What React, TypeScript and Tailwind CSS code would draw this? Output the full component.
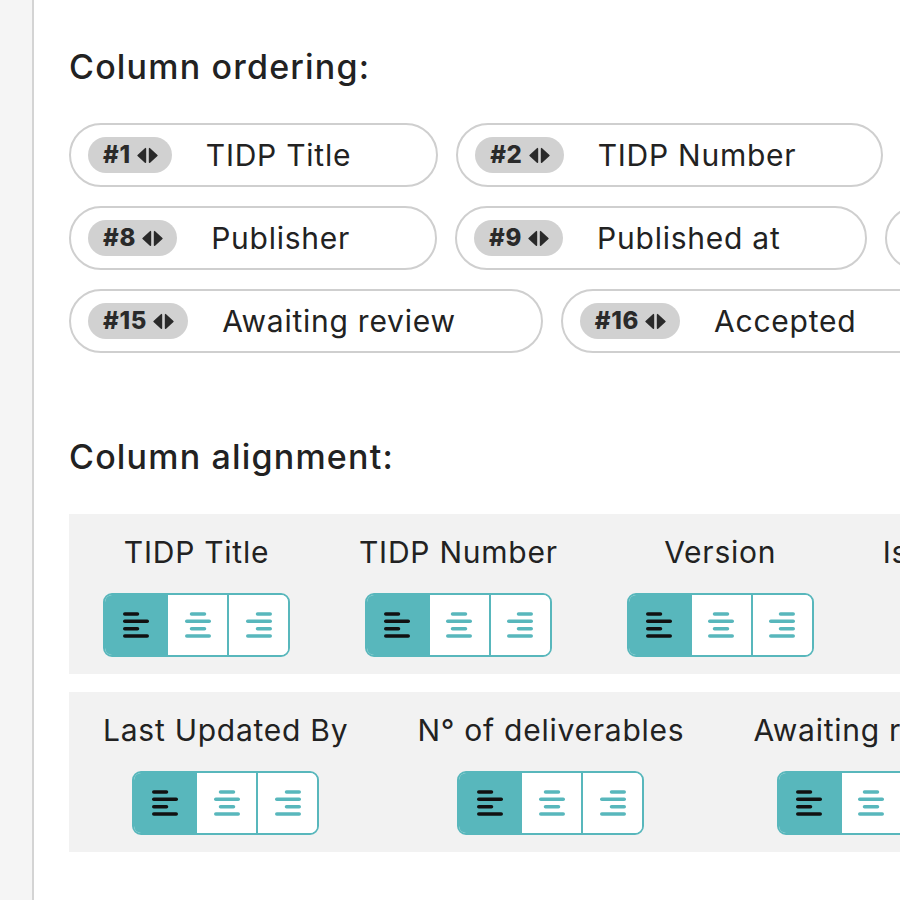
import React from 'react';

type Align = 'left' | 'center' | 'right';

const TEAL = '#58b7bc';

const orderingRows: { n: number; label: string }[][] = [
  [
    { n: 1, label: 'TIDP Title' },
    { n: 2, label: 'TIDP Number' },
    { n: 3, label: 'Version' },
  ],
  [
    { n: 8, label: 'Publisher' },
    { n: 9, label: 'Published at' },
    { n: 10, label: 'Status' },
  ],
  [
    { n: 15, label: 'Awaiting review' },
    { n: 16, label: 'Accepted' },
    { n: 17, label: 'Rejected' },
  ],
];

const alignmentRows: string[][] = [
  ['TIDP Title', 'TIDP Number', 'Version', 'Issuer Organisation'],
  ['Last Updated By', 'N° of deliverables', 'Awaiting review'],
];

function SwapIcon() {
  return (
    <svg width="23" height="17" viewBox="0 0 22 16" className="shrink-0">
      <polygon points="9,1.5 9,14.5 2,8" fill="#2a2a2a" stroke="#2a2a2a" strokeWidth="1.5" strokeLinejoin="round" />
      <polygon points="13,1.5 13,14.5 20,8" fill="#2a2a2a" stroke="#2a2a2a" strokeWidth="1.5" strokeLinejoin="round" />
    </svg>
  );
}

function AlignIcon({ align, color }: { align: Align; color: string }) {
  const short =
    align === 'left' ? [1.75, 14.5] : align === 'center' ? [6.5, 19.5] : [11.5, 24.25];
  const ys = [2, 9.33, 16.67, 24];
  return (
    <svg width="26" height="26" viewBox="0 0 26 26">
      {ys.map((y, i) => {
        const [x1, x2] = i % 2 === 0 ? short : [1.75, 24.25];
        return (
          <line
            key={i}
            x1={x1}
            y1={y}
            x2={x2}
            y2={y}
            stroke={color}
            strokeWidth="3.5"
            strokeLinecap="round"
          />
        );
      })}
    </svg>
  );
}

function OrderChip({ n, label }: { n: number; label: string }) {
  return (
    <div className="flex items-center h-[64px] shrink-0 rounded-full border-2 border-[#cfcfcf] bg-white pl-[17px] pr-[85px]">
      <span className="flex items-center gap-[5px] h-[36px] rounded-full bg-[#d1d1d1] pl-[15px] pr-[13px] text-[24px] font-extrabold tracking-[0.03em] text-[#2a2a2a] leading-none">
        #{n}
        <SwapIcon />
      </span>
      <span className="ml-[34px] text-[30px] leading-[36px] tracking-[0.025em] text-[#222] whitespace-nowrap">
        {label}
      </span>
    </div>
  );
}

function AlignControl({ label }: { label: string }) {
  const options: Align[] = ['left', 'center', 'right'];
  const selected: Align = 'left';
  return (
    <div className="flex flex-col items-center gap-[23px] shrink-0">
      <span className="text-[30px] leading-[36px] tracking-[0.025em] text-[#222] whitespace-nowrap">{label}</span>
      <div className="flex rounded-[9px] border-2 border-[#58b7bc] overflow-hidden bg-white">
        {options.map((o, i) => (
          <button
            key={o}
            className={
              'flex items-center justify-center w-[61px] h-[60px] ' +
              (i > 0 ? 'border-l-2 border-[#58b7bc] ' : '') +
              (o === selected ? 'bg-[#58b7bc]' : 'bg-white')
            }
          >
            <AlignIcon align={o} color={o === selected ? '#111' : TEAL} />
          </button>
        ))}
      </div>
    </div>
  );
}

export default function App() {
  return (
    <div className="flex w-[900px] h-[900px] overflow-hidden bg-white font-['Inter',sans-serif] text-[#222]">
      <aside className="w-[34px] shrink-0 bg-[#f5f5f5] border-r-2 border-[#d4d4d4]" />

      <main className="flex-1 min-w-0 pl-[35px] pt-[47px]">
        <h2 className="text-[34px] leading-[40px] font-medium tracking-[0.035em] whitespace-nowrap">
          Column ordering:
        </h2>

        <div className="flex flex-col gap-[19px] mt-[36px]">
          {orderingRows.map((row, i) => (
            <div key={i} className="flex gap-[18px]">
              {row.map((c) => (
                <OrderChip key={c.n} n={c.n} label={c.label} />
              ))}
            </div>
          ))}
        </div>

        <h2 className="mt-[84px] text-[34px] leading-[40px] font-medium tracking-[0.035em] whitespace-nowrap">
          Column alignment:
        </h2>

        <div className="flex flex-col gap-[18px] mt-[37px]">
          {alignmentRows.map((row, i) => (
            <div key={i} className="flex gap-[69px] bg-[#f2f2f2] pl-[34px] pt-[20px] pb-[17px]">
              {row.map((label) => (
                <AlignControl key={label} label={label} />
              ))}
            </div>
          ))}
        </div>
      </main>
    </div>
  );
}
